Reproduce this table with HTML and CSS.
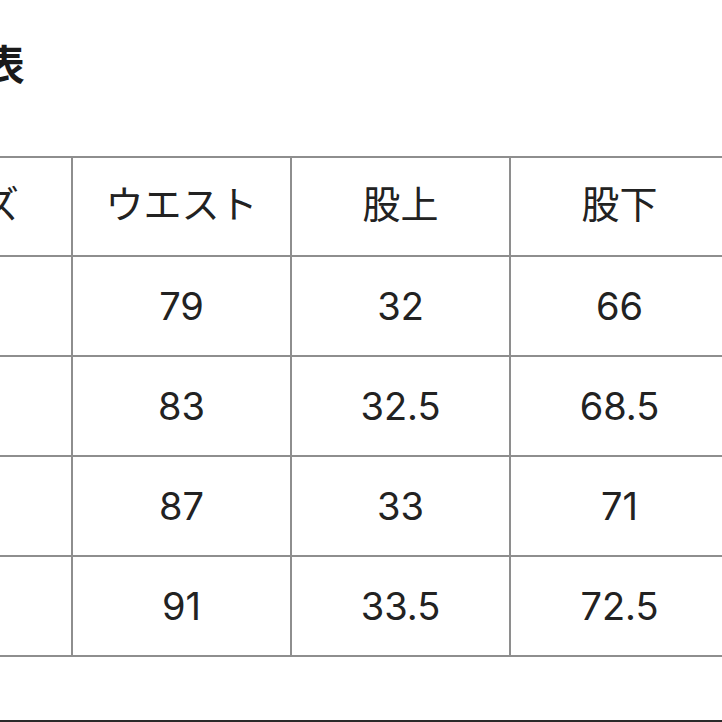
FILE: index.html
```html
<!DOCTYPE html>
<html lang="ja">
<head>
<meta charset="utf-8">
<title>サイズ表</title>
<link rel="stylesheet" href="styles.css">
</head>
<body>
<div class="sheet">
  <h1 class="title">サイズ表</h1>
  <table class="size-table">
    <colgroup>
      <col class="col"><col class="col"><col class="col"><col class="col">
    </colgroup>
    <thead>
      <tr><th>サイズ</th><th>ウエスト</th><th>股上</th><th>股下</th></tr>
    </thead>
    <tbody>
      <tr><td>S</td><td>79</td><td>32</td><td>66</td></tr>
      <tr><td>M</td><td>83</td><td>32.5</td><td>68.5</td></tr>
      <tr><td>L</td><td>87</td><td>33</td><td>71</td></tr>
      <tr><td>XL</td><td>91</td><td>33.5</td><td>72.5</td></tr>
    </tbody>
  </table>
</div>
</body>
</html>
```

FILE: styles.css
```css
html, body {
  margin: 0;
  padding: 0;
  background: #ffffff;
  overflow: hidden;
}

body {
  height: 722px;
  box-sizing: border-box;
  border-bottom: 2px solid #2a2a2a;
  font-family: "Noto Sans CJK JP", "Noto Sans", sans-serif;
  color: #222222;
}

.sheet {
  margin-left: -148px;
  width: 900px;
}

.title {
  margin: 42px 0 0 0;
  padding-left: 10px;
  font-size: 41px;
  line-height: 41px;
  font-weight: 700;
  color: #1a1a1a;
}

.size-table {
  margin-top: 73px;
  border-collapse: collapse;
  table-layout: fixed;
  width: 876px;
}

.col {
  width: 219px;
}

.size-table th,
.size-table td {
  border: 2px solid #8e8e8e;
  height: 98px;
  padding: 0;
  text-align: center;
  vertical-align: middle;
  font-family: "Inter", "Noto Sans CJK JP", sans-serif;
  font-size: 38px;
  font-weight: 400;
  line-height: 1;
  color: #222222;
}

.size-table th {
  padding-bottom: 6px;
  height: 91px;
}
```
